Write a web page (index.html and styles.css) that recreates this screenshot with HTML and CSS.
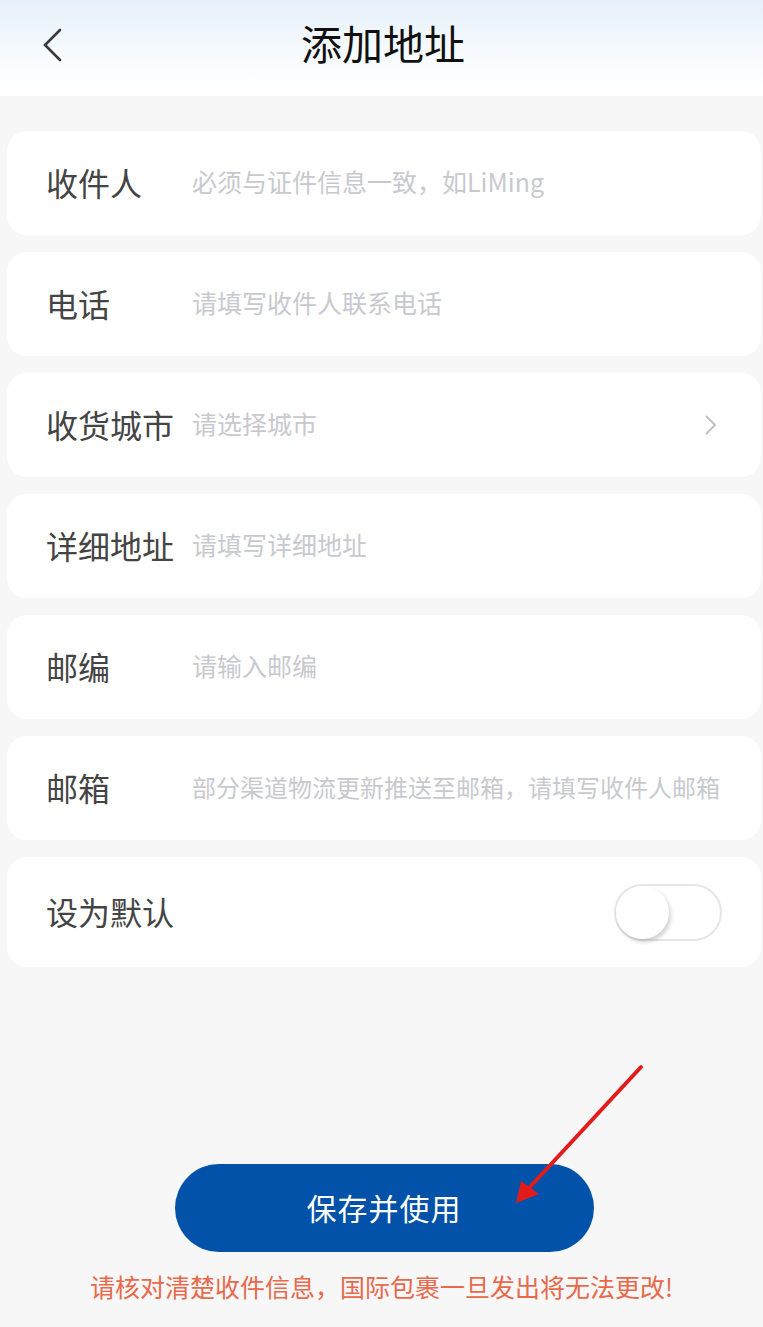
FILE: index.html
```html
<!DOCTYPE html>
<html lang="zh-CN">
<head>
  <meta charset="UTF-8">
  <title>添加地址</title>
  <link rel="stylesheet" href="styles.css">
</head>
<body>
  <div class="page">
    <div class="nav-bar">
      <svg class="back-icon" width="24" height="40" viewBox="0 0 24 40">
        <polyline points="18,2 3,17 18,32" fill="none" stroke="#3a3a3a" stroke-width="2.6" stroke-linecap="round" stroke-linejoin="miter"/>
      </svg>
      <h1 class="nav-title">添加地址</h1>
    </div>

    <div class="form-list">
      <div class="form-item">
        <span class="item-label">收件人</span>
        <span class="item-input">必须与证件信息一致，如LiMing</span>
      </div>
      <div class="form-item">
        <span class="item-label">电话</span>
        <span class="item-input">请填写收件人联系电话</span>
      </div>
      <div class="form-item">
        <span class="item-label">收货城市</span>
        <span class="item-input">请选择城市</span>
        <svg class="item-arrow" width="14" height="22" viewBox="0 0 14 22">
          <polyline points="2,2 11,11 2,20" fill="none" stroke="#bdbdbd" stroke-width="1.8"/>
        </svg>
      </div>
      <div class="form-item">
        <span class="item-label">详细地址</span>
        <span class="item-input">请填写详细地址</span>
      </div>
      <div class="form-item">
        <span class="item-label">邮编</span>
        <span class="item-input">请输入邮编</span>
      </div>
      <div class="form-item">
        <span class="item-label">邮箱</span>
        <span class="item-input item-input-long">部分渠道物流更新推送至邮箱，请填写收件人邮箱</span>
      </div>
      <div class="form-item form-item-switch">
        <span class="item-label">设为默认</span>
        <span class="switch"><span class="switch-knob"></span></span>
      </div>
    </div>

    <div class="bottom-area">
      <button type="button" class="save-btn">保存并使用</button>
      <p class="tips">请核对清楚收件信息，国际包裹一旦发出将无法更改!</p>
    </div>

    <svg class="mark-arrow" width="150" height="160" viewBox="0 0 150 160">
      <line x1="136" y1="7" x2="24" y2="128" stroke="#e31b1b" stroke-width="4" stroke-linecap="round"/>
      <polygon points="11,143 16,121 34,134" fill="#e31b1b"/>
    </svg>
  </div>
</body>
</html>
```

FILE: styles.css
```css
body {
  margin: 0;
  padding: 0;
  background: #f7f7f7;
  font-family: "Noto Sans CJK SC", "Noto Sans", sans-serif;
}
.page {
  position: relative;
  min-height: 1327px;
}
.nav-bar {
  height: 96px;
  background: linear-gradient(to bottom, #e5f0fa 0%, #f8fbfe 60%, #ffffff 100%);
  display: flex;
  align-items: center;
  justify-content: center;
  position: relative;
}
.back-icon {
  position: absolute;
  left: 42px;
  top: 28px;
}
.nav-title {
  margin: 0 0 12px 3px;
  font-size: 41px;
  font-weight: 400;
  color: #111;
  line-height: 1;
}
.form-list {
  padding: 35px 2px 0 7px;
  display: flex;
  flex-direction: column;
  gap: 17px;
}
.form-item {
  height: 104px;
  background: #fff;
  border-radius: 20px;
  display: flex;
  align-items: center;
  padding: 0 39px;
  box-sizing: border-box;
}
.form-item-switch {
  height: 110px;
}
.item-label {
  width: 146px;
  flex: 0 0 146px;
  font-size: 32px;
  color: #444;
  line-height: 1;
  white-space: nowrap;
  margin-bottom: 3px;
}
.item-input {
  flex: 1;
  font-size: 25px;
  color: #c8c9cf;
  white-space: nowrap;
  line-height: 1;
  margin-bottom: 3px;
}
.item-input-long {
  font-size: 24px;
}
.item-arrow {
  margin-right: 4px;
}
.switch {
  margin-left: auto;
  width: 108px;
  height: 57px;
  border: 2px solid #e6e6e6;
  border-radius: 30px;
  box-sizing: border-box;
  position: relative;
  background: #fff;
}
.switch-knob {
  position: absolute;
  left: 0;
  top: 0;
  width: 53px;
  height: 53px;
  border-radius: 50%;
  background: #fff;
  box-shadow: 2px 3px 4px rgba(0,0,0,0.18);
}
.bottom-area {
  margin-top: 197px;
  display: flex;
  flex-direction: column;
  align-items: center;
}
.save-btn {
  width: 419px;
  height: 88px;
  margin-left: 5px;
  padding-bottom: 4px;
  border: none;
  border-radius: 44px;
  background: #0152a8;
  color: #fff;
  font-family: inherit;
  font-size: 30px;
  letter-spacing: 1px;
  cursor: pointer;
}
.tips {
  margin: 20px 0 0 0;
  font-size: 25px;
  line-height: 28px;
  color: #e8694b;
}
.mark-arrow {
  position: absolute;
  left: 505px;
  top: 1060px;
  pointer-events: none;
}
```
